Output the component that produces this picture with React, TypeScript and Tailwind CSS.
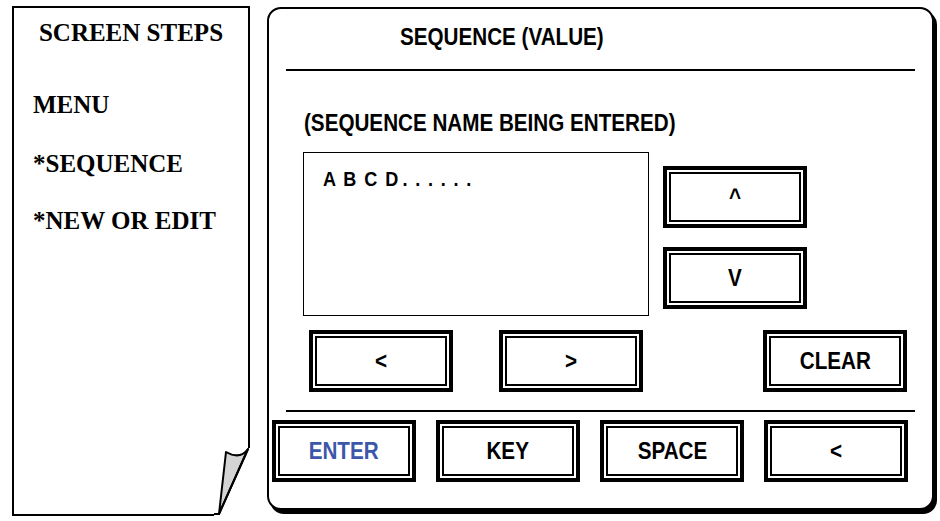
import React from "react";

// Arial Narrow look: Liberation Sans bold squeezed horizontally
const narrow = "font-['Liberation_Sans','Arial',sans-serif] font-bold inline-block scale-x-[0.86]";
const serif = "font-['Liberation_Serif','Times_New_Roman',serif] font-bold";

interface KeyProps {
  label: string;
  className?: string;
  blue?: boolean;
}

const Key: React.FC<KeyProps> = ({ label, className, blue }) => {
  return (
    <div className={`w-[144px] h-[62px] border-[4px] border-black p-[2px] bg-white ${className ?? ""}`}>
      <div
        className={`w-full h-full border-2 border-black flex items-center justify-center ${
          blue ? "text-[#3c57a9]" : "text-black"
        }`}
      >
        <span className={`${narrow} text-[24px] leading-none`}>{label}</span>
      </div>
    </div>
  );
};

const PageCurl = () => (
  <svg
    className="absolute right-[-2px] bottom-[-2px]"
    width="36"
    height="68"
    viewBox="0 0 36 68"
  >
    <polygon points="36,0 36,68 0,68 0,66 33,66 33,0" fill="white" />
    <path
      d="M34 1 Q26 12 12 4 L5 66 Z"
      fill="#d4d4d4"
      stroke="black"
      strokeWidth="2"
      strokeLinejoin="round"
    />
    <path d="M34 1 L5 66 L0 66" fill="none" stroke="black" strokeWidth="2" />
  </svg>
);

const ScreenSteps = () => (
  <div className="relative mt-[6px] ml-[12px] w-[238px] h-[510px] border-2 border-black bg-white">
    <div className={`${serif} text-[25px] leading-none text-black`}>
      <div className="mt-[12px] text-center">SCREEN STEPS</div>
      <div className="mt-[47px] pl-[19px]">MENU</div>
      <div className="mt-[34px] pl-[19px]">*SEQUENCE</div>
      <div className="mt-[32px] pl-[19px]">*NEW OR EDIT</div>
    </div>
    <PageCurl />
  </div>
);

const SequenceScreen = () => (
  <div className="mt-[7px] ml-[17px] w-[667px] h-[503px] border-2 border-black rounded-[14px] shadow-[3px_4px_0_#000] bg-white flex flex-col">
    <div className="pl-[131px] pt-[16px] h-[60px]">
      <span className={`${narrow} origin-left text-[24px] leading-none`}>SEQUENCE (VALUE)</span>
    </div>
    <div className="mx-[17px] h-[2px] bg-black" />
    <div className="pl-[35px] mt-[40px]">
      <span className={`${narrow} origin-left text-[24px] leading-none`}>
        (SEQUENCE NAME BEING ENTERED)
      </span>
    </div>
    <div className="flex pl-[34px] mt-[15px]">
      <div className="w-[346px] h-[164px] border-[1.5px] border-black px-[19px] pt-[15px]">
        <span className={`${narrow} origin-left text-[21px] leading-none`}>
          <span className="tracking-[1.7px]">A B C D</span>
          <span className="tracking-[9px] ml-[3px]">......</span>
        </span>
      </div>
      <div className="flex flex-col ml-[14px] mt-[14px] gap-[19px]">
        <Key label="^" />
        <Key label="V" />
      </div>
    </div>
    <div className="flex pl-[40px] mt-[14px]">
      <Key label="<" />
      <Key label=">" className="ml-[46px]" />
      <Key label="CLEAR" className="ml-[120px]" />
    </div>
    <div className="mx-[17px] h-[2px] bg-black mt-[18px]" />
    <div className="flex pl-[3px] mt-[8px] gap-[20px]">
      <Key label="ENTER" blue />
      <Key label="KEY" />
      <Key label="SPACE" />
      <Key label="<" />
    </div>
  </div>
);

export default function App() {
  return (
    <div className="w-[940px] h-[521px] bg-white flex items-start overflow-hidden">
      <ScreenSteps />
      <SequenceScreen />
    </div>
  );
}
